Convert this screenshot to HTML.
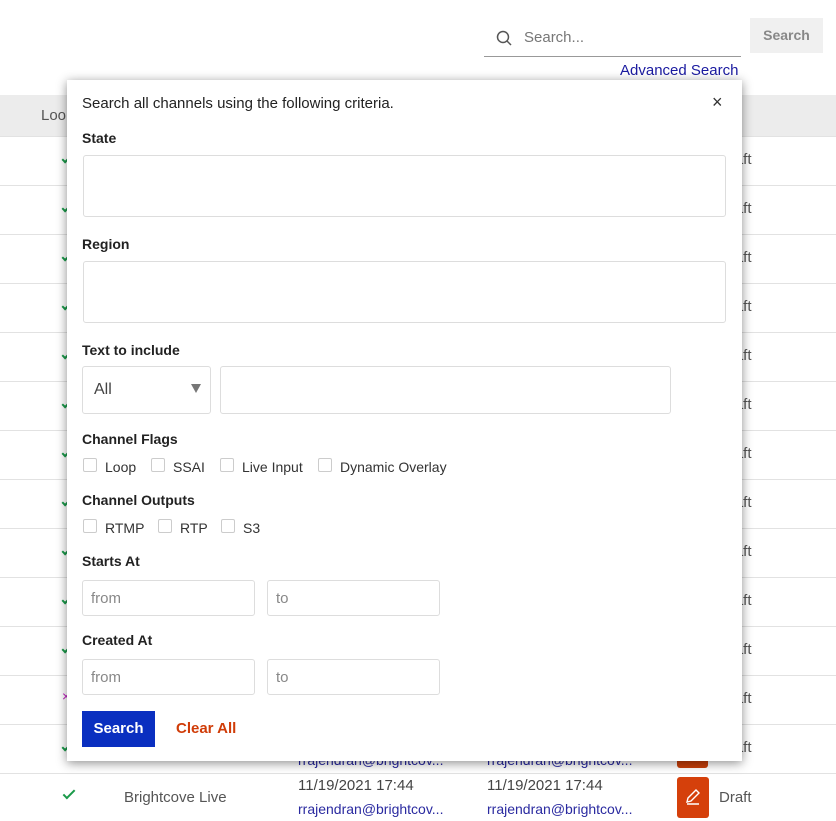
<!DOCTYPE html>
<html><head><meta charset="utf-8"><style>
*{box-sizing:border-box;margin:0;padding:0}
body{width:836px;height:821px;position:relative;overflow:hidden;background:#fff;font-family:"Liberation Sans",sans-serif;color:#333}
.a{position:absolute}
.row{position:absolute;left:0;width:836px;border-top:1px solid #e2e2e2;height:49px}
.ft{position:absolute;left:719px;font-size:15px;color:#555}
.ck{position:absolute;left:62px;width:9px;height:5px;border-left:2px solid #1a9a4a;border-bottom:2px solid #1a9a4a;transform:rotate(-45deg)}
.lbl{position:absolute;left:82px;font-size:14px;font-weight:bold;color:#222}
.inp{position:absolute;border:1px solid #ddd;border-radius:3px;background:#fff}
.cb{position:absolute;width:14px;height:14px;border:1px solid #ccc;border-radius:2px}
.ct{position:absolute;font-size:14px;color:#333}
.ph{position:absolute;font-size:15px;color:#888}
.em{position:absolute;font-size:14px;color:#2a2aa0}
</style></head><body>
<svg class="a" style="left:495px;top:29px" width="18" height="18" viewBox="0 0 18 18"><circle cx="8" cy="8" r="5.5" fill="none" stroke="#555" stroke-width="1.5"/><line x1="12" y1="12" x2="16" y2="16" stroke="#555" stroke-width="1.5"/></svg>
<div class="a" style="left:524px;top:29px;font-size:15px;color:#777">Search...</div>
<div class="a" style="left:484px;top:56px;width:257px;height:1px;background:#999"></div>
<div class="a" style="left:750px;top:18px;width:73px;height:35px;background:#f0f0f0;color:#888;font-size:14px;font-weight:bold;text-align:center;line-height:35px">Search</div>
<div class="a" style="left:620px;top:62px;font-size:15px;color:#1a1aa0">Advanced Search</div>
<div class="a" style="left:0;top:95px;width:836px;height:41px;background:#ececec"></div>
<div class="a" style="left:41px;top:107px;font-size:15px;color:#555">Loo</div>
<div class="row" style="top:136px"></div><div class="row" style="top:185px"></div><div class="row" style="top:234px"></div><div class="row" style="top:283px"></div><div class="row" style="top:332px"></div><div class="row" style="top:381px"></div><div class="row" style="top:430px"></div><div class="row" style="top:479px"></div><div class="row" style="top:528px"></div><div class="row" style="top:577px"></div><div class="row" style="top:626px"></div><div class="row" style="top:675px"></div><div class="row" style="top:724px"></div><div class="row" style="top:773px;height:48px"></div>
<div class="ft" style="top:151px">Draft</div><div class="ft" style="top:200px">Draft</div><div class="ft" style="top:249px">Draft</div><div class="ft" style="top:298px">Draft</div><div class="ft" style="top:347px">Draft</div><div class="ft" style="top:396px">Draft</div><div class="ft" style="top:445px">Draft</div><div class="ft" style="top:494px">Draft</div><div class="ft" style="top:543px">Draft</div><div class="ft" style="top:592px">Draft</div><div class="ft" style="top:641px">Draft</div><div class="ft" style="top:690px">Draft</div><div class="ft" style="top:739px">Draft</div>
<div class="ck" style="top:156px"></div><div class="ck" style="top:205px"></div><div class="ck" style="top:254px"></div><div class="ck" style="top:303px"></div><div class="ck" style="top:352px"></div><div class="ck" style="top:401px"></div><div class="ck" style="top:450px"></div><div class="ck" style="top:499px"></div><div class="ck" style="top:548px"></div><div class="ck" style="top:597px"></div><div class="ck" style="top:646px"></div><div class="a" style="left:62px;top:688px;color:#c020c0;font-size:14px">×</div><div class="ck" style="top:744px"></div>
<div class="em" style="left:298px;top:752px">rrajendran@brightcov...</div><div class="em" style="left:487px;top:752px">rrajendran@brightcov...</div>
<div class="a" style="left:677px;top:748px;width:31px;height:20px;background:#c8400a;border-radius:3px"></div>
<div class="ck" style="left:63px;top:790px;width:12px;height:6px"></div>
<div class="a" style="left:124px;top:789px;font-size:15px;color:#555">Brightcove Live</div>
<div class="a" style="left:298px;top:777px;font-size:15px;color:#444">11/19/2021 17:44</div>
<div class="a" style="left:487px;top:777px;font-size:15px;color:#444">11/19/2021 17:44</div>
<div class="em" style="left:298px;top:801px">rrajendran@brightcov...</div><div class="em" style="left:487px;top:801px">rrajendran@brightcov...</div>
<div class="a" style="left:677px;top:777px;width:32px;height:41px;background:#d5400b;border-radius:3px"></div>
<svg class="a" style="left:684px;top:788px" width="18" height="18" viewBox="0 0 18 18"><path d="M3 14 L4 10 L12 2 L15 5 L7 13 Z M3 16 H15" fill="none" stroke="#fff" stroke-width="1.4"/></svg>
<div class="a" style="left:719px;top:789px;font-size:15px;color:#555">Draft</div>

<div class="a" style="left:67px;top:80px;width:675px;height:681px;background:#fff;box-shadow:0 2px 10px rgba(0,0,0,.45)"></div>
<div class="a" style="left:82px;top:95px;font-size:15px;color:#222">Search all channels using the following criteria.</div>
<div class="a" style="left:712px;top:92px;font-size:18px;color:#333">×</div>
<div class="lbl" style="top:130px">State</div>
<div class="inp" style="left:83px;top:155px;width:643px;height:62px"></div>
<div class="lbl" style="top:236px">Region</div>
<div class="inp" style="left:83px;top:261px;width:643px;height:62px"></div>
<div class="lbl" style="top:342px">Text to include</div>
<div class="inp" style="left:82px;top:366px;width:129px;height:48px"></div>
<div class="a" style="left:94px;top:381px;font-size:16px;color:#444">All</div>
<div class="a" style="left:191px;top:384px;width:0;height:0;border-left:5px solid transparent;border-right:5px solid transparent;border-top:9px solid #777"></div>
<div class="inp" style="left:220px;top:366px;width:451px;height:48px"></div>
<div class="lbl" style="top:431px">Channel Flags</div>
<div class="cb" style="left:83px;top:458px"></div><div class="ct" style="left:105px;top:459px">Loop</div>
<div class="cb" style="left:151px;top:458px"></div><div class="ct" style="left:173px;top:459px">SSAI</div>
<div class="cb" style="left:220px;top:458px"></div><div class="ct" style="left:242px;top:459px">Live Input</div>
<div class="cb" style="left:318px;top:458px"></div><div class="ct" style="left:340px;top:459px">Dynamic Overlay</div>
<div class="lbl" style="top:492px">Channel Outputs</div>
<div class="cb" style="left:83px;top:519px"></div><div class="ct" style="left:105px;top:520px">RTMP</div>
<div class="cb" style="left:158px;top:519px"></div><div class="ct" style="left:180px;top:520px">RTP</div>
<div class="cb" style="left:221px;top:519px"></div><div class="ct" style="left:243px;top:520px">S3</div>
<div class="lbl" style="top:553px">Starts At</div>
<div class="inp" style="left:82px;top:580px;width:173px;height:36px"></div><div class="ph" style="left:91px;top:590px">from</div>
<div class="inp" style="left:267px;top:580px;width:173px;height:36px"></div><div class="ph" style="left:276px;top:590px">to</div>
<div class="lbl" style="top:632px">Created At</div>
<div class="inp" style="left:82px;top:659px;width:173px;height:36px"></div><div class="ph" style="left:91px;top:669px">from</div>
<div class="inp" style="left:267px;top:659px;width:173px;height:36px"></div><div class="ph" style="left:276px;top:669px">to</div>
<div class="a" style="left:82px;top:711px;width:73px;height:36px;background:#0a2fc0;color:#fff;font-size:15px;font-weight:bold;text-align:center;line-height:36px">Search</div>
<div class="a" style="left:176px;top:720px;font-size:15px;font-weight:bold;color:#d03c08">Clear All</div>
</body></html>
